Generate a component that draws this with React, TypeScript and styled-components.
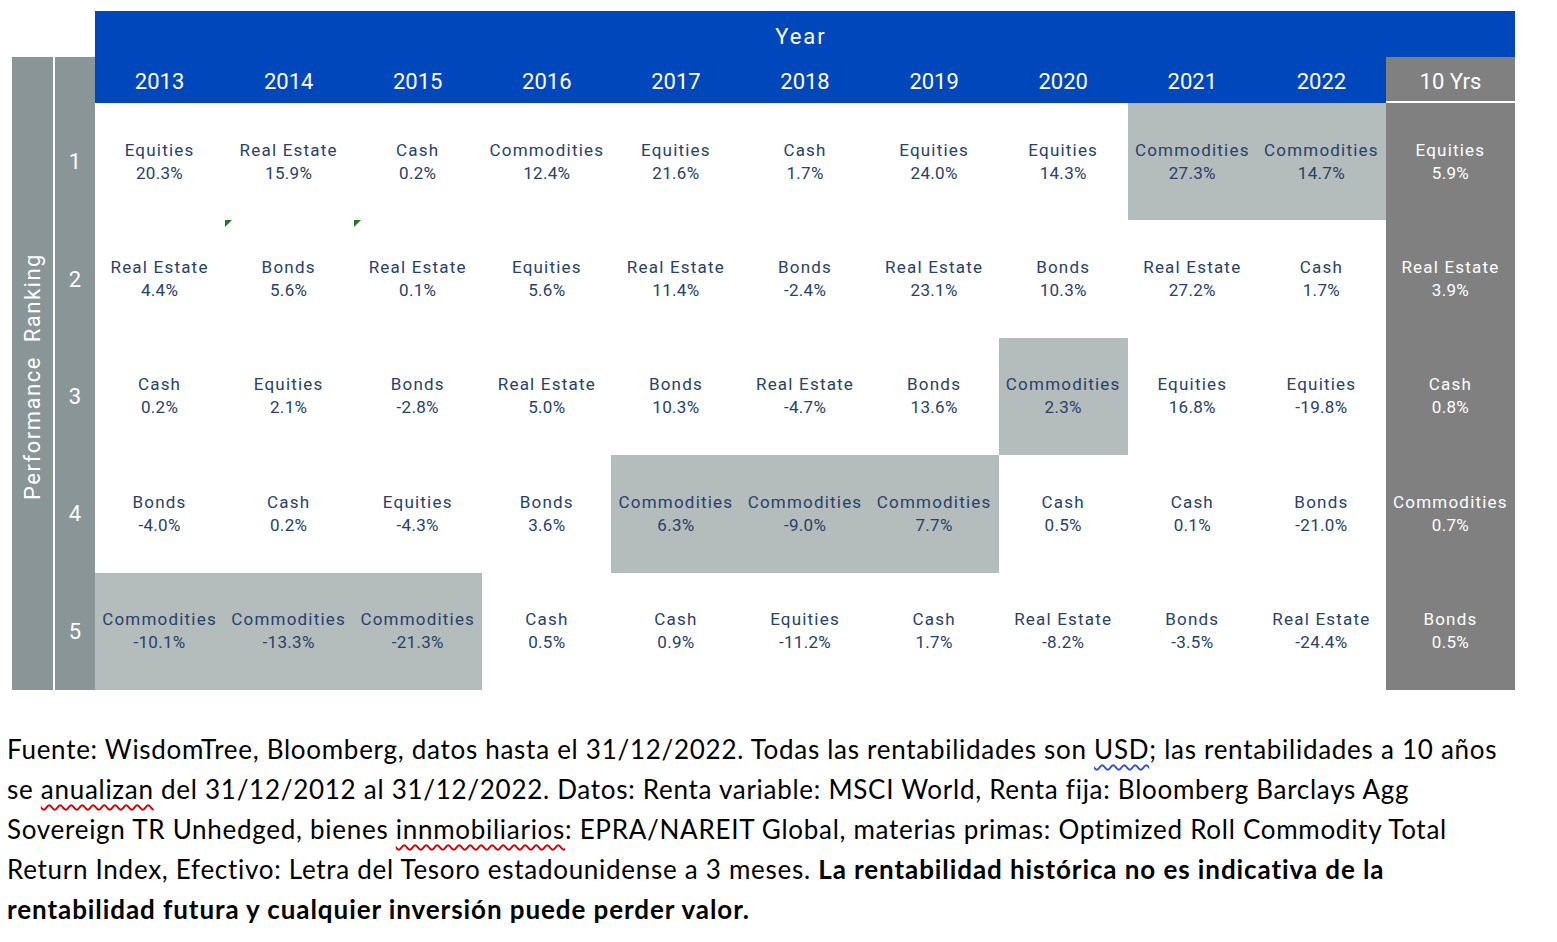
import React from "react";
import styled, { createGlobalStyle } from "styled-components";

const GlobalStyle = createGlobalStyle`
  html, body {
    margin: 0;
    padding: 0;
    background: #ffffff;
  }
`;

const Page = styled.div`
  width: 1557px;
  height: 942px;
  padding: 11px 0 0 12px;
  box-sizing: border-box;
  overflow: hidden;
`;

const Chart = styled.div`
  display: grid;
  grid-template-columns: 41px 2px 40px repeat(10, 129.1px) 129px;
  grid-template-rows: 46px 46px repeat(5, 117.4px);
  font-family: Roboto, "Liberation Sans", sans-serif;
`;

const YearBand = styled.div`
  grid-column: 4 / 15;
  grid-row: 1;
  background: #0047bb;
  color: #ffffff;
  font-size: 22px;
  letter-spacing: 2px;
  display: flex;
  align-items: flex-end;
  justify-content: center;
  padding-bottom: 8px;
  box-sizing: border-box;
  padding-right: 8px;
`;

const SideLabel = styled.div`
  grid-column: 1;
  grid-row: 2 / 8;
  background: #8a9598;
  display: flex;
  align-items: center;
  justify-content: center;
`;

const SideText = styled.span`
  color: #ffffff;
  font-size: 22px;
  letter-spacing: 1.5px;
  white-space: pre;
  transform: rotate(-90deg);
  margin-top: 6px;
`;

const RankHead = styled.div`
  grid-column: 3;
  grid-row: 2;
  background: #8a9598;
`;

const Rank = styled.div<{ $row: number }>`
  grid-column: 3;
  grid-row: ${(p) => p.$row};
  background: #8a9598;
  color: #ffffff;
  font-size: 22px;
  display: flex;
  align-items: center;
  justify-content: center;
`;

const YearCell = styled.div<{ $col: number; $total?: boolean }>`
  grid-row: 2;
  grid-column: ${(p) => p.$col};
  background: ${(p) => (p.$total ? "#808080" : "#0047bb")};
  color: #ffffff;
  font-size: 22px;
  padding-top: 2px;
  display: flex;
  align-items: center;
  justify-content: center;
  box-shadow: ${(p) => (p.$total ? "inset 0 -2px 0 #ffffff" : "none")};
`;

const Cell = styled.div<{ $row: number; $col: number; $hl?: boolean; $total?: boolean }>`
  grid-row: ${(p) => p.$row};
  grid-column: ${(p) => p.$col};
  position: relative;
  background: ${(p) => (p.$total ? "#808080" : p.$hl ? "#b4bcbc" : "#ffffff")};
  color: ${(p) => (p.$total ? "#ffffff" : "#27416b")};
  display: flex;
  flex-direction: column;
  align-items: center;
  justify-content: center;
  font-size: 17px;
  line-height: 23px;
  white-space: nowrap;
`;

const Name = styled.span`
  letter-spacing: 1.2px;
`;

const Value = styled.span`
  letter-spacing: 0.3px;
`;

const ErrorMark = styled.span`
  position: absolute;
  left: 1px;
  top: 0;
  width: 0;
  height: 0;
  border-top: 7px solid #1e7b1e;
  border-right: 7px solid transparent;
`;

const Notes = styled.div`
  margin-top: 39px;
  margin-left: -5px;
  font-family: Lato, "Liberation Sans", sans-serif;
  font-size: 26px;
  letter-spacing: 0.72px;
  line-height: 40px;
  color: #000000;
`;

const Line = styled.div`
  white-space: nowrap;
`;

const Squiggle = styled.span<{ $tone: "red" | "blue" }>`
  text-decoration: underline wavy ${(p) => (p.$tone === "red" ? "#d00000" : "#3050d0")};
  text-decoration-thickness: 1.5px;
  text-underline-offset: 5px;
`;

const Strong = styled.b`
  font-weight: 700;
  letter-spacing: 0.92px;
`;

type Entry = [string, string, boolean?];

const years = ["2013", "2014", "2015", "2016", "2017", "2018", "2019", "2020", "2021", "2022"];

const rows: Entry[][] = [
  [
    ["Equities", "20.3%"],
    ["Real Estate", "15.9%"],
    ["Cash", "0.2%"],
    ["Commodities", "12.4%"],
    ["Equities", "21.6%"],
    ["Cash", "1.7%"],
    ["Equities", "24.0%"],
    ["Equities", "14.3%"],
    ["Commodities", "27.3%", true],
    ["Commodities", "14.7%", true],
    ["Equities", "5.9%"],
  ],
  [
    ["Real Estate", "4.4%"],
    ["Bonds", "5.6%"],
    ["Real Estate", "0.1%"],
    ["Equities", "5.6%"],
    ["Real Estate", "11.4%"],
    ["Bonds", "-2.4%"],
    ["Real Estate", "23.1%"],
    ["Bonds", "10.3%"],
    ["Real Estate", "27.2%"],
    ["Cash", "1.7%"],
    ["Real Estate", "3.9%"],
  ],
  [
    ["Cash", "0.2%"],
    ["Equities", "2.1%"],
    ["Bonds", "-2.8%"],
    ["Real Estate", "5.0%"],
    ["Bonds", "10.3%"],
    ["Real Estate", "-4.7%"],
    ["Bonds", "13.6%"],
    ["Commodities", "2.3%", true],
    ["Equities", "16.8%"],
    ["Equities", "-19.8%"],
    ["Cash", "0.8%"],
  ],
  [
    ["Bonds", "-4.0%"],
    ["Cash", "0.2%"],
    ["Equities", "-4.3%"],
    ["Bonds", "3.6%"],
    ["Commodities", "6.3%", true],
    ["Commodities", "-9.0%", true],
    ["Commodities", "7.7%", true],
    ["Cash", "0.5%"],
    ["Cash", "0.1%"],
    ["Bonds", "-21.0%"],
    ["Commodities", "0.7%"],
  ],
  [
    ["Commodities", "-10.1%", true],
    ["Commodities", "-13.3%", true],
    ["Commodities", "-21.3%", true],
    ["Cash", "0.5%"],
    ["Cash", "0.9%"],
    ["Equities", "-11.2%"],
    ["Cash", "1.7%"],
    ["Real Estate", "-8.2%"],
    ["Bonds", "-3.5%"],
    ["Real Estate", "-24.4%"],
    ["Bonds", "0.5%"],
  ],
];

// green corner marks left over from the spreadsheet, row 2 of 2014 and 2015
const marked = new Set(["1-1", "1-2"]);

export default function App() {
  return (
    <Page>
      <GlobalStyle />
      <Chart>
        <YearBand>Year</YearBand>
        <SideLabel>
          <SideText>Performance  Ranking</SideText>
        </SideLabel>
        <RankHead />
        {years.map((y, i) => (
          <YearCell key={y} $col={i + 4}>
            {y}
          </YearCell>
        ))}
        <YearCell $col={14} $total>
          10 Yrs
        </YearCell>
        {rows.map((row, r) => (
          <React.Fragment key={r}>
            <Rank $row={r + 3}>{r + 1}</Rank>
            {row.map(([name, value, hl], c) => (
              <Cell key={c} $row={r + 3} $col={c + 4} $hl={hl} $total={c === 10}>
                {marked.has(`${r}-${c}`) && <ErrorMark />}
                <Name>{name}</Name>
                <Value>{value}</Value>
              </Cell>
            ))}
          </React.Fragment>
        ))}
      </Chart>
      <Notes>
        <Line>
          Fuente: WisdomTree, Bloomberg, datos hasta el 31/12/2022. Todas las rentabilidades son{" "}
          <Squiggle $tone="blue">USD</Squiggle>; las rentabilidades a 10 años
        </Line>
        <Line>
          se <Squiggle $tone="red">anualizan</Squiggle> del 31/12/2012 al 31/12/2022. Datos: Renta
          variable: MSCI World, Renta fija: Bloomberg Barclays Agg
        </Line>
        <Line>
          Sovereign TR Unhedged, bienes <Squiggle $tone="red">innmobiliarios</Squiggle>: EPRA/NAREIT
          Global, materias primas: Optimized Roll Commodity Total
        </Line>
        <Line>
          Return Index, Efectivo: Letra del Tesoro estadounidense a 3 meses.{" "}
          <Strong>La rentabilidad histórica no es indicativa de la</Strong>
        </Line>
        <Line>
          <Strong>rentabilidad futura y cualquier inversión puede perder valor.</Strong>
        </Line>
      </Notes>
    </Page>
  );
}
